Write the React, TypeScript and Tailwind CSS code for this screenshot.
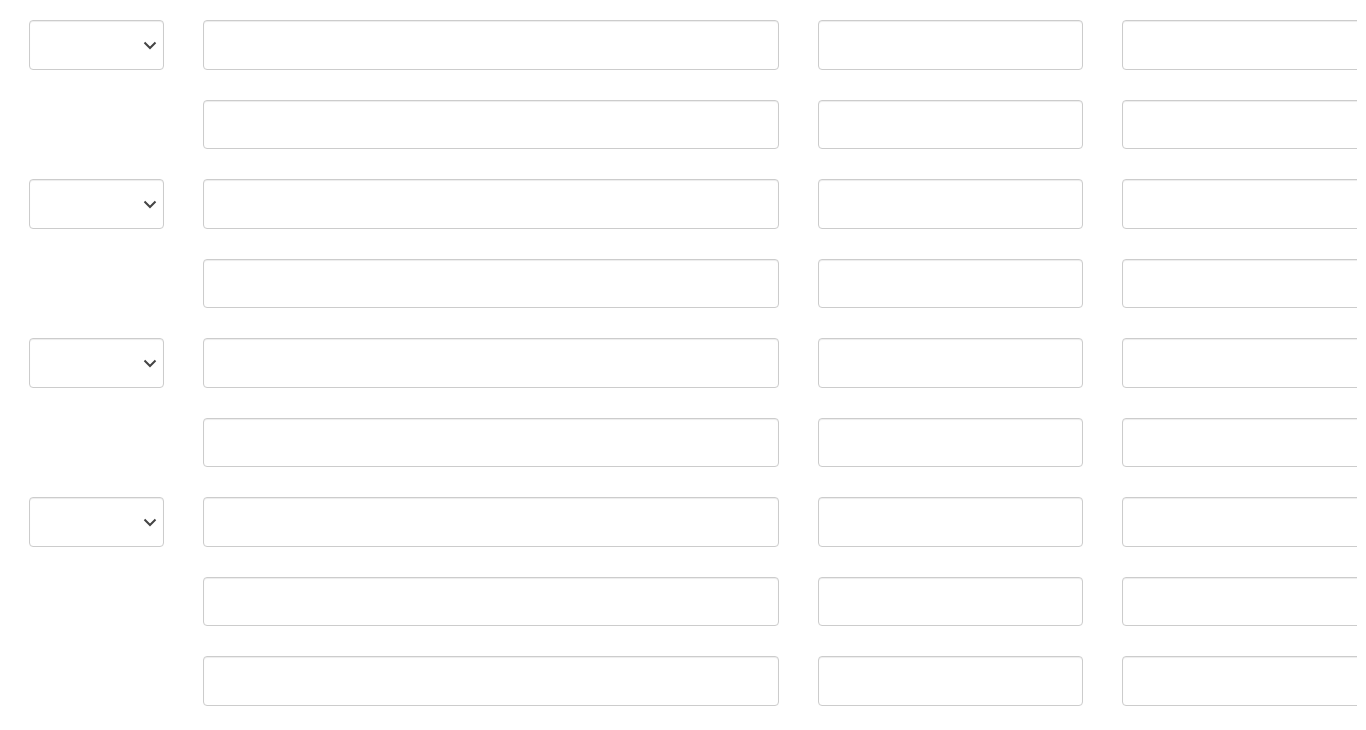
import React from 'react';

const rows = [true, false, true, false, true, false, true, false, false];

function Select() {
  return (
    <div className="relative h-[49.5px] w-[135px] rounded border border-[#cccccc] bg-white shadow-[inset_0_1px_1px_rgba(0,0,0,0.075)]">
      <svg
        className="absolute right-[5px] top-1/2 -translate-y-1/2"
        width="16"
        height="10"
        viewBox="0 0 16 10"
        fill="none"
      >
        <path d="M2.5 2.5l5.5 5.5 5.5-5.5" stroke="#444" strokeWidth="2" />
      </svg>
    </div>
  );
}

function Field({ className }: { className: string }) {
  return (
    <div
      className={`h-[49.5px] shrink-0 rounded border border-[#cccccc] bg-white shadow-[inset_0_1px_1px_rgba(0,0,0,0.075)] ${className}`}
    />
  );
}

export default function App() {
  return (
    <div className="h-[730px] w-[1357px] overflow-hidden bg-white font-['Liberation_Sans',sans-serif]">
      <div className="flex flex-col gap-[30px] pl-[29px] pt-[20px]">
        {rows.map((hasSelect, i) => (
          <div key={i} className="flex gap-[39px]">
            <div className="w-[135px] shrink-0">{hasSelect && <Select />}</div>
            <Field className="w-[576px]" />
            <Field className="w-[265px]" />
            <Field className="w-[300px]" />
          </div>
        ))}
      </div>
    </div>
  );
}
